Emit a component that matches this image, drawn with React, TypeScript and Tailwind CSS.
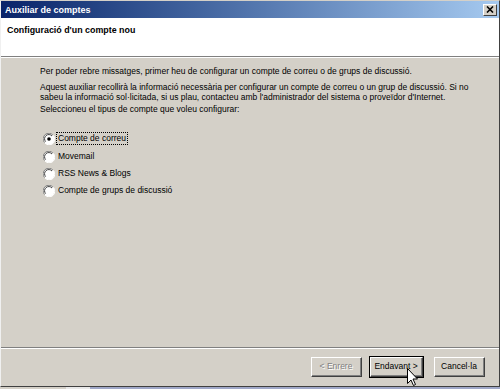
import React from "react";

const font = { fontFamily: '"Liberation Sans", Arial, sans-serif' };

function Radio({ checked, label, focus }: { checked?: boolean; label: string; focus?: boolean }) {
  return (
    <div className="flex items-center h-[17px]">
      <div className="relative w-[10px] h-[10px] ml-[4px] mr-[3px]">
        <svg width="12" height="12" viewBox="0 0 12 12" className="absolute -left-[1px] -top-[1px]">
          <circle cx="6" cy="6" r="5.5" fill="#ffffff" />
          <path d="M10 2.2 A5.5 5.5 0 0 0 1.5 9.5" stroke="#808080" strokeWidth="1" fill="none" />
          <path d="M9 3 A4.2 4.2 0 0 0 2.6 8.6" stroke="#404040" strokeWidth="1" fill="none" />
          <path d="M2 10 A5.5 5.5 0 0 0 10.4 2.4" stroke="#ffffff" strokeWidth="1" fill="none" />
          {checked && <circle cx="6" cy="6" r="1.8" fill="#000000" />}
        </svg>
      </div>
      <span
        className={
          "text-[8.5px] leading-[11px] text-black px-[1px] " +
          (focus ? "outline outline-1 outline-dotted outline-black" : "")
        }
      >
        {label}
      </span>
    </div>
  );
}

function Button({
  children,
  disabled,
  isDefault,
  w,
}: {
  children: React.ReactNode;
  disabled?: boolean;
  isDefault?: boolean;
  w: string;
}) {
  return (
    <div className={(isDefault ? "border border-black " : "border border-transparent ") + w + " h-[22px]"}>
      <div className="h-full w-full border-t border-l border-white border-b border-r border-b-[#404040] border-r-[#404040]">
        <div className="h-full w-full border-b border-r border-b-[#808080] border-r-[#808080] flex items-center justify-center">
          <span
            className={
              "text-[8.5px] leading-[11px] " +
              (disabled ? "text-[#808080] [text-shadow:1px_1px_0_#ffffff]" : "text-black")
            }
          >
            {children}
          </span>
        </div>
      </div>
    </div>
  );
}

export default function App() {
  return (
    <div className="w-[500px] h-[389px] bg-[#d4d0c8] relative overflow-hidden" style={font}>
      <div className="h-[387px] flex flex-col border-l border-t border-l-[#f0f0f0] border-t-[#d4d0c8] border-r border-r-[#404040] border-b border-b-[#404040]">
        {/* title bar */}
        <div className="h-[17px] flex items-center justify-between bg-gradient-to-r from-[#0a246a] to-[#a6caf0] pl-[4px] pr-[2px]">
          <span className="text-white font-bold text-[9px] leading-[12px]">Auxiliar de comptes</span>
          <div className="w-[14px] h-[12px] bg-[#d4d0c8] border-t border-l border-white border-r border-b border-r-[#404040] border-b-[#404040] flex items-center justify-center">
            <svg width="8" height="7" viewBox="0 0 8 7">
              <path d="M1 0.5 L7 6.5 M7 0.5 L1 6.5" stroke="#000" strokeWidth="1.6" />
            </svg>
          </div>
        </div>
        {/* header */}
        <div className="h-[38px] bg-white flex items-start pl-[6px] pt-[6px]">
          <span className="font-bold text-[8.9px] leading-[12px] text-black">Configuració d'un compte nou</span>
        </div>
        <div className="h-[1px] bg-[#808080]" />
        <div className="h-[1px] bg-white" />
        {/* body */}
        <div className="flex-1 pl-[39px] pr-[10px] pt-[8px] text-[8.5px] leading-[10px] text-black">
          <p className="mb-[6px] whitespace-nowrap">
            Per poder rebre missatges, primer heu de configurar un compte de correu o de grups de discussió.
          </p>
          <p className="mb-[2px] whitespace-nowrap">
            Aquest auxiliar recollirà la informació necessària per configurar un compte de correu o un grup de discussió. Si no
            <br />
            sabeu la informació sol·licitada, si us plau, contacteu amb l'administrador del sistema o proveïdor d'Internet.
          </p>
          <p>Seleccioneu el tipus de compte que voleu configurar:</p>
          <div className="mt-[16px] flex flex-col">
            <div className="mb-[1px]">
              <Radio checked focus label="Compte de correu" />
            </div>
            <Radio label="Movemail" />
            <Radio label="RSS News & Blogs" />
            <Radio label="Compte de grups de discussió" />
          </div>
        </div>
        <div className="h-[1px] bg-[#808080]" />
        <div className="h-[1px] bg-white" />
        {/* footer */}
        <div className="h-[37px] flex items-start justify-end pt-[7px] pr-[13px] gap-[6px]">
          <Button w="w-[53px]" disabled>
            &lt; Enrere
          </Button>
          <div className="relative">
            <Button w="w-[55px]" isDefault>
              Endavant &gt;
            </Button>
            <svg
              width="12"
              height="19"
              viewBox="0 0 12 19"
              className="absolute left-[38px] top-[12px]"
            >
              <path
                d="M0.5 0.5 L0.5 15.5 L4 12 L6.5 17.5 L8.5 16.5 L6 11 L10.5 11 Z"
                fill="#ffffff"
                stroke="#000000"
                strokeWidth="1"
                strokeLinejoin="miter"
              />
            </svg>
          </div>
          <div className="ml-[3px]">
            <Button w="w-[53px]">Cancel·la</Button>
          </div>
        </div>
      </div>
      <div className="h-[2px] flex">
        <div className="w-[66px] bg-[#d4d0c8]" />
        <div className="w-[24px] bg-[#e8e8e8]" />
        <div className="flex-1 bg-[#a0a8c8]" />
      </div>
    </div>
  );
}
